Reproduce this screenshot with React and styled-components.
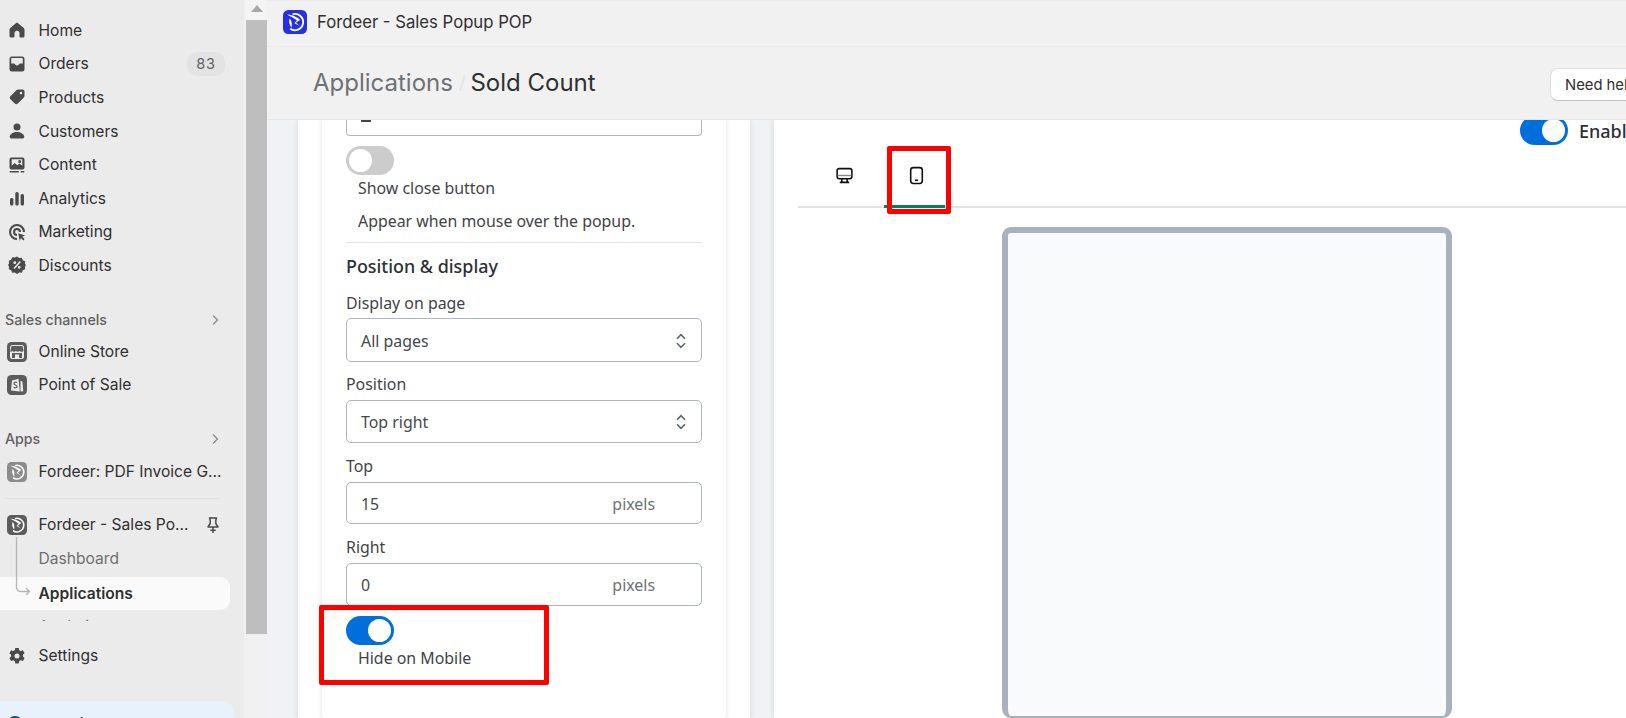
import React from "react";
import styled, { createGlobalStyle } from "styled-components";

const Global = createGlobalStyle`
  html, body { margin: 0; padding: 0; height: 100%; overflow: hidden; background: #f1f2f4; }
  * { box-sizing: border-box; }
  #root { height: 718px; }
`;

const Shell = styled.div`
  display: flex; width: 1626px; height: 718px; overflow: hidden;
  font-family: "Noto Sans", sans-serif; color: #202223;
`;

/* ---------- sidebar ---------- */
const Sidebar = styled.aside`
  flex: 0 0 244px; height: 718px; background: #ebebeb; display: flex; flex-direction: column;
  overflow: hidden; font-family: Inter, sans-serif; color: #303030;
`;
const NavClip = styled.nav`
  height: 621px; flex: none; overflow: hidden; padding-top: 13.500px; display: flex; flex-direction: column;
`;
const NavRow = styled.div`
  flex: none; display: flex; align-items: center; height: ${p => p.$h || 33}px;
  margin-top: ${p => p.$mt || 0}px; padding-left: ${p => p.$indent ? 38.500 : 7}px; gap: 11.500px;
  font-size: 15.600px; white-space: nowrap; position: relative; z-index: 1;
  font-weight: ${p => p.$active ? 600 : 400};
  color: ${p => p.$muted ? "#6f6f6f" : "#303030"};
  width: ${p => p.$active ? "230px" : "auto"};
  background: ${p => p.$active ? "#fafafa" : "transparent"};
  border-radius: ${p => p.$active ? "0 10px 10px 0" : 0};
`;
const IconSlot = styled.span`
  flex: none; width: 20px; height: 20px; display: flex; align-items: center; justify-content: center;
  margin-right: ${p => p.$mr || 0}px;
  svg { display: block; }
`;
const Grow = styled.span` flex: 1; min-width: 0; `;
const Count = styled.span`
  margin-right: 19px; width: 38px; height: 24px; border-radius: 10px; background: #e3e3e3; color: #616161;
  font-size: 14.500px; letter-spacing: .8px; display: flex; align-items: center; justify-content: center; font-weight: 400;
`;
const SectionHead = styled.div`
  flex: none; display: flex; align-items: center; height: 24px; margin-top: ${p => p.$mt}px;
  padding: 0 22px 0 5px; font-size: 14.200px; font-weight: 550; color: #616161; justify-content: space-between;
`;
const NavRule = styled.hr`
  flex: none; margin: 10px 24px 0 5px; border: 0; height: 1px; background: #e1e1e1;
`;
const Branch = styled.svg`
  position: absolute; left: 14px; top: 537px; z-index: 2; pointer-events: none;
`;
const Banner = styled.div`
  flex: none; margin-top: 29px; width: 234px; height: 60px; background: #e8f2fd; border-radius: 0 12px 0 0;
  display: flex; align-items: flex-start; gap: 7px; padding: 13px 0 0 6px; font-size: 15px; color: #303030; font-weight: 600;
  svg { flex: none; margin-top: 1px; }
`;

/* ---------- scrollbar ---------- */
const Gutter = styled.div`
  flex: 0 0 23px; height: 718px; background: #f1f1f1; padding-left: 2px; display: flex; flex-direction: column;
`;
const ScrollArrow = styled.div`
  height: 20px; flex: none; display: flex; justify-content: center; padding-top: 5px; background: #f4f4f4;
`;
const ScrollThumb = styled.div` height: 614px; flex: none; background: #bebebe; `;

/* ---------- main ---------- */
const Main = styled.main`
  flex: 1; min-width: 0; height: 718px; display: flex; flex-direction: column; overflow: hidden;
`;
const AppBar = styled.div`
  flex: none; height: 47px; background: #f1f1f1; border-bottom: 1px solid #ebebeb; border-top: 1px solid #ececec;
  display: flex; align-items: center; padding: 0 0 3px 16px; gap: 10px;
  font-family: Inter, sans-serif; font-size: 16.700px; color: #303030;
`;
const PageHead = styled.header`
  flex: none; height: 73px; background: #f1f1f1; border-bottom: 1px solid #e6e7e8; display: flex; align-items: center;
  padding: 0 0 2px 46px; font-family: Inter, sans-serif; font-size: 24px; position: relative; z-index: 3;
`;
const CrumbLink = styled.span` color: #6d7175; `;
const CrumbSep = styled.span` color: #e2e2e2; margin: 0 5px 0 6px; font-size: 18px; `;
const CrumbNow = styled.span` color: #303030; `;
const HelpBtn = styled.button`
  position: absolute; left: 1283px; top: 21px; width: 120px; height: 33px; background: #fff; border: 1px solid #dedede;
  border-bottom-color: #c4c4c4; border-radius: 8px; font: 400 14.800px Inter, sans-serif; color: #303030; text-align: left;
  padding: 0 0 0 14px; white-space: nowrap;
`;
const Body = styled.div`
  flex: 1; min-height: 0; display: flex; padding-left: 31px; overflow: hidden; background: #f1f2f4; gap: 24px;
`;
const LeftPanel = styled.section`
  flex: 0 0 452px; background: #fff; padding: 0 24px; box-shadow: 0 0 6px rgba(40,50,60,.14);
`;
const Card = styled.div`
  background: #fff; height: 602px; padding: 0 24px; border-radius: 0 0 8px 8px; box-shadow: 0 0 5px rgba(40,50,60,.13);
  display: flex; flex-direction: column;
`;
const ClippedInput = styled.div`
  flex: none; height: 16px; border: 1px solid #aeb4b9; border-top: 0; border-radius: 0 0 4px 4px; padding-left: 14px;
  span { display: block; width: 10px; height: 2px; background: #444; margin-top: 0; }
`;
const Toggle = styled.span`
  flex: none; display: flex; width: 48px; height: 29px; border-radius: 15px; padding: 3px;
  background: ${p => p.$on ? "#006fdb" : "#cccccc"};
  justify-content: ${p => p.$on ? "flex-end" : "flex-start"};
  margin-top: ${p => p.$mt || 0}px;
  &::after { content: ""; width: 23px; height: 23px; border-radius: 50%; background: #fff; }
`;
const ToggleText = styled.div`
  flex: none; padding-left: 12px; font-size: 15.900px; line-height: 24px; color: #3f4347; margin-top: ${p => p.$mt || 0}px;
`;
const Rule = styled.hr` flex: none; margin: 9px 0 0; border: 0; height: 1px; background: #e1e3e7; `;
const GroupTitle = styled.h3`
  margin: 10px 0 0; font-size: 17.900px; line-height: 26px; font-weight: 500; color: #2c3036;
`;
const FieldLabel = styled.label`
  display: block; flex: none; font-size: 15.900px; line-height: 22px; color: #3f4347; margin-top: ${p => p.$mt}px;
`;
const Control = styled.div`
  flex: none; display: flex; align-items: center; height: ${p => p.$h || 43}px; margin-top: ${p => p.$top || 4}px;
  border: 1px solid #aeb4bd; border-radius: 5px; padding: 1px 10px 0 14px; font-size: 15.900px; color: #44484c; position: relative;
  svg { margin-left: auto; }
`;
const Unit = styled.span` margin-left: auto; margin-right: 36px; color: #6d7175; `;
const RedMark = styled.div`
  position: absolute; border: 5px solid #ff0000; border-radius: 2px; pointer-events: none; z-index: 5;
  left: ${p => p.$x}px; top: ${p => p.$y}px; width: ${p => p.$w}px; height: ${p => p.$h}px;
`;
const RightCard = styled.section`
  flex: 0 0 900px; background: #fff; padding-left: 24px; box-shadow: 0 0 6px rgba(40,50,60,.14);
  display: flex; flex-direction: column;
`;
const EnableRow = styled.div`
  flex: none; display: flex; align-items: center; gap: 11px; margin: -4px 0 0 722px; font-size: 18px; color: #2c3036; font-weight: 500;
`;
const Tabs = styled.div`
  flex: none; height: 63px; border-bottom: 2px solid #e1e3e5; display: flex;
`;
const Tab = styled.div`
  width: ${p => p.$w}px; margin-left: ${p => p.$ml || 0}px; height: 63px; display: flex; align-items: center; justify-content: center;
  padding-left: ${p => p.$pl || 0}px;
  border-bottom: 3px solid ${p => p.$on ? "#008060" : "transparent"};
`;
const PreviewFrame = styled.div`
  flex: none; margin: 19px 0 0 204px; width: 450px; height: 491px; border: 6px solid #a9b2bc; border-bottom-width: 2px;
  border-radius: 9px; background: #f9fafb;
`;

/* ---------- icons ---------- */
const ink = "#4a4a4a";
const Ico = ({ children, s = 20 }) => <svg width={s} height={s} viewBox="0 0 20 20" fill={ink}>{children}</svg>;
const Home = () => <Ico><path d="M9.200 2.900a1.200 1.200 0 0 1 1.600 0l6 5.200c.5.4.7 1 .7 1.600v6.200c0 1-.8 1.600-1.700 1.600H13.400a.9.900 0 0 1-.9-.9v-3.400a2.500 2.500 0 0 0-5 0v3.400c0 .5-.4.900-.9.900H4.200c-.9 0-1.700-.7-1.700-1.600V9.700c0-.6.200-1.200.7-1.600z"/></Ico>;
const Orders = () => <Ico><path fillRule="evenodd" d="M5 2.500h10A2.500 2.500 0 0 1 17.500 5v10a2.500 2.500 0 0 1-2.500 2.500H5A2.500 2.500 0 0 1 2.500 15V5A2.500 2.500 0 0 1 5 2.500zM4.200 5v4.500h2.600c.6 0 1 .3 1.200.8.3.7 1 1.200 2 1.200s1.700-.5 2-1.200c.2-.5.600-.8 1.200-.8h2.600V5c0-.5-.4-.9-.9-.9H5c-.5 0-.8.400-.8.900z"/></Ico>;
const Tag = () => <Ico><path fillRule="evenodd" d="M11.200 2.500h4.300c1.100 0 2 .9 2 2v4.300c0 .7-.3 1.300-.7 1.800l-6 6c-.8.8-2.200.8-3 0l-4.400-4.400c-.8-.8-.8-2.200 0-3l6-6c.5-.4 1.100-.7 1.800-.7zM14 7.300a1.300 1.300 0 1 0 0-2.600 1.300 1.300 0 0 0 0 2.600z"/></Ico>;
const Person = () => <Ico><circle cx="10" cy="6" r="3.500"/><path d="M10 11c3.600 0 6.800 1.800 7.300 4.600.2 1-.6 1.900-1.600 1.900H4.300c-1 0-1.800-.9-1.600-1.900C3.200 12.800 6.400 11 10 11z"/></Ico>;
const Content = () => <Ico><path fillRule="evenodd" d="M4.500 2.500h11A2 2 0 0 1 17.500 4.500v8a2 2 0 0 1-2 2h-11a2 2 0 0 1-2-2v-8a2 2 0 0 1 2-2zm.2 1.800v6.500l3-2.800 2.600 2.300 2.200-1.700 2.800 2.200V4.300zM12.700 8a1.500 1.500 0 1 0 0-3 1.500 1.500 0 0 0 0 3z"/><rect x="2.500" y="16" width="9.500" height="1.600" rx=".8"/><rect x="13.500" y="16" width="4" height="1.600" rx=".8"/></Ico>;
const Bars = () => <Ico><rect x="3" y="10" width="3.400" height="7.500" rx="1.500"/><rect x="8.300" y="4" width="3.400" height="13.500" rx="1.500"/><rect x="13.600" y="6" width="3.400" height="11.500" rx="1.500"/></Ico>;
const Target = () => <Ico><path d="M10 2a8 8 0 0 1 8 8h-2.100A5.900 5.900 0 1 0 10 15.900V18a8 8 0 0 1 0-16z"/><path d="M10 6a4 4 0 0 1 4 4h-2.100A1.900 1.900 0 1 0 10 11.900V14a4 4 0 0 1 0-8z"/><path d="M11.200 11.200l7 2.300-3 1.200 2.400 2.400-1.300 1.300-2.400-2.400-1.200 3z"/></Ico>;
const Discount = () => <Ico><path fillRule="evenodd" d="M10 1.500l2.200 1.500 2.600-.3 1 2.500 2.400 1-.3 2.600L19 10l-1.100 1.700.3 2.600-2.400 1-1 2.500-2.600-.3L10 19l-2.200-1.500-2.600.3-1-2.500-2.400-1 .3-2.600L1 10l1.100-1.700-.3-2.600 2.400-1 1-2.500 2.600.3zM7.800 6.300a1.400 1.400 0 1 0 0 2.800 1.400 1.400 0 0 0 0-2.800zm4.400 4.600a1.400 1.400 0 1 0 0 2.800 1.400 1.400 0 0 0 0-2.800zM12.800 6l-6.300 6.900 1.100 1.100 6.300-6.900z"/></Ico>;
const Gear = () => <Ico><path fillRule="evenodd" d="M8.300 2h3.400l.5 2.300 1.500.8 2.200-.8 1.700 2.900-1.700 1.600v1.700l1.700 1.600-1.700 2.900-2.200-.8-1.500.8-.5 2.400H8.300l-.5-2.400-1.500-.8-2.200.8-1.700-2.900 1.700-1.600V8.800L2.400 7.200l1.700-2.900 2.200.8 1.500-.8zM10 7.500a2.500 2.500 0 1 0 0 5 2.500 2.500 0 0 0 0-5z"/></Ico>;
const Store = () => <Ico><rect x="0" y="0" width="20" height="20" rx="4.500" fill="#5c5c5c"/><rect x="3" y="3" width="14" height="14" rx="2.500" fill="#ebebeb"/><path d="M4.500 4h11l1 4.200c0 1-1 1.600-1.800 1.600-.8 0-1.500-.4-1.800-1-.4.600-1.100 1-1.900 1s-1.600-.4-2-1c-.4.600-1.100 1-1.900 1s-1.500-.4-1.800-1c-.3.600-1 1-1.800 1S3.500 9.200 3.500 8.200z" fill="#5c5c5c"/><path d="M5 11h10v5H5z" fill="#5c5c5c"/><path d="M8 12.500h4V16H8z" fill="#ebebeb"/></Ico>;
const Pos = () => <Ico><rect width="20" height="20" rx="4.500" fill="#5c5c5c"/><path d="M5 5.500l6.500-1.800L12.800 16.500 4 15.500z" fill="#ebebeb"/><path d="M13.500 6l1.800.3 1 10-2.800.2z" fill="#ebebeb"/><path d="M10 7.500c-.8-.8-3-.5-3 1 0 1.800 3 1.300 3 3 0 1.400-2.200 1.600-3.300.8" fill="none" stroke="#5c5c5c" strokeWidth="1.200"/></Ico>;
const Fordeer = ({ bg = "#5c5c5c", size = 20, mid = "#fff" }) => (
  <svg width={size} height={size} viewBox="0 0 20 20">
    <rect width="20" height="20" rx="4.500" fill={bg} />
    <path d="M8 3.600A6.800 6.800 0 1 1 6 15.600" fill="none" stroke={mid} strokeWidth="1.500" />
    <path d="M3.300 3.800c3 0 6.300 1 9.700 3.200l1.200 1.300-3.400 2.200 2.800 2.700-4-2.200 2-2.500C9 6.800 6.500 5.500 3.300 3.800z" fill={mid} />
    <path d="M5.500 7c1.600 1.500 2.300 4 1.600 7.800C5.300 12 4.600 9.500 5.500 7z" fill={mid} />
  </svg>
);
const Pin = () => <svg width="20" height="20" viewBox="0 0 20 20" fill="none" stroke={ink} strokeWidth="1.500" strokeLinejoin="round"><path d="M6.500 3h7l-.7 2.200v3.300l2.200 3.500H5l2.200-3.500V5.200zM10 12v6M7.300 15.200h5.400"/></svg>;
const Chevron = () => <svg width="14" height="14" viewBox="0 0 14 14" fill="none" stroke="#8a8a8a" strokeWidth="1.300"><path d="M5 2.500L9.500 7 5 11.500"/></svg>;
const Updown = () => <svg width="20" height="20" viewBox="0 0 20 20" fill="none" stroke="#5c6670" strokeWidth="1.600"><path d="M6 7.800L10 3.700l4 4.100M6 12.200l4 4.100 4-4.100"/></svg>;
const Desktop = () => <svg width="19" height="19" viewBox="0 0 18 18" fill="none" stroke="#111" strokeWidth="1.500"><rect x="2" y="2.500" width="14" height="9.500" rx="2"/><path d="M2.500 9h13" strokeWidth="1.300" stroke="#888"/><path d="M6.500 12v3M11.500 12v3M4.500 15.500h9"/></svg>;
const Mobile = () => <svg width="19" height="19" viewBox="0 0 18 18" fill="none" stroke="#111" strokeWidth="1.500"><rect x="3.500" y="1.500" width="11" height="15" rx="2.500"/><path d="M7.500 13.500h3" /></svg>;

const Row = ({ icon, label, ...rest }) => (
  <NavRow {...rest}><IconSlot>{icon}</IconSlot><span>{label}</span></NavRow>
);

export default function App() {
  return (
    <Shell>
      <Global />
      <Sidebar>
        <NavClip>
          <Row $h={33.6} icon={<Home />} label="Home" />
          <NavRow $h={33.6}><IconSlot><Orders /></IconSlot><Grow>Orders</Grow><Count>83</Count></NavRow>
          <Row $h={33.6} icon={<Tag />} label="Products" />
          <Row $h={33.6} icon={<Person />} label="Customers" />
          <Row $h={33.6} icon={<Content />} label="Content" />
          <Row $h={33.6} icon={<Bars />} label="Analytics" />
          <Row $h={33.6} icon={<Target />} label="Marketing" />
          <Row $h={33.6} icon={<Discount />} label="Discounts" />
          <SectionHead $mt={25.5}>Sales channels<Chevron /></SectionHead>
          <Row $mt={3.5} icon={<Store />} label="Online Store" />
          <Row icon={<Pos />} label="Point of Sale" />
          <SectionHead $mt={25.5}>Apps<Chevron /></SectionHead>
          <Row $mt={4.5} icon={<Fordeer bg="#8c8c8c" />} label="Fordeer: PDF Invoice G..." />
          <NavRule />
          <NavRow $mt={9}><IconSlot><Fordeer /></IconSlot><Grow>Fordeer - Sales Po...</Grow><IconSlot $mr={21}><Pin /></IconSlot></NavRow>
          <NavRow $mt={1} $indent $muted>Dashboard</NavRow>
          <NavRow $mt={1.5} $indent $active>Applications</NavRow>
          <NavRow $indent $muted>Analytics</NavRow>
        </NavClip>
        <Branch width="20" height="60" viewBox="0 0 20 60" fill="none" stroke="#b5b5b5" strokeWidth="1.300">
          <path d="M2.500 0v50c0 3 1.500 4.500 4.500 4.500h8.500M12 51l3.500 3.500L12 58" />
        </Branch>
        <Row $mt={18} icon={<Gear />} label="Settings" />
        <Banner>
          <svg width="18" height="18" viewBox="0 0 18 18"><circle cx="9" cy="9" r="8" fill="#00527c" /></svg>
          Your trial ends soon
        </Banner>
      </Sidebar>
      <Gutter>
        <ScrollArrow><svg width="12" height="7" viewBox="0 0 12 7"><path d="M6 0l6 7H0z" fill="#a8a8a8" /></svg></ScrollArrow>
        <ScrollThumb />
      </Gutter>
      <Main>
        <AppBar><Fordeer bg="#2530e0" size={24} />Fordeer - Sales Popup POP</AppBar>
        <PageHead>
          <CrumbLink>Applications</CrumbLink><CrumbSep>/</CrumbSep><CrumbNow>Sold Count</CrumbNow>
          <HelpBtn>Need help?</HelpBtn>
        </PageHead>
        <Body>
          <LeftPanel>
            <Card>
              <ClippedInput><span /></ClippedInput>
              <Toggle $mt={10} />
              <ToggleText $mt={1}>Show close button</ToggleText>
              <ToggleText $mt={9}>Appear when mouse over the popup.</ToggleText>
              <Rule />
              <GroupTitle>Position &amp; display</GroupTitle>
              <FieldLabel $mt={13}>Display on page</FieldLabel>
              <Control $h={44}>All pages<Updown /></Control>
              <FieldLabel $mt={11}>Position</FieldLabel>
              <Control $top={5}>Top right<Updown /></Control>
              <FieldLabel $mt={12}>Top</FieldLabel>
              <Control $h={42} $top={5}>15<Unit>pixels</Unit></Control>
              <FieldLabel $mt={12}>Right</FieldLabel>
              <Control $top={5}>0<Unit>pixels</Unit></Control>
              <Toggle $on $mt={10} />
              <ToggleText $mt={1}>Hide on Mobile</ToggleText>
            </Card>
          </LeftPanel>
          <RightCard>
            <EnableRow><Toggle $on /><span>Enable</span></EnableRow>
            <Tabs>
              <Tab $w={92}><Desktop /></Tab>
              <Tab $w={61} $ml={-6} $pl={3} $on><Mobile /></Tab>
            </Tabs>
            <PreviewFrame />
          </RightCard>
        </Body>
      </Main>
      <RedMark $x={319} $y={605} $w={230} $h={80} />
      <RedMark $x={887} $y={146} $w={64} $h={68} />
    </Shell>
  );
}
